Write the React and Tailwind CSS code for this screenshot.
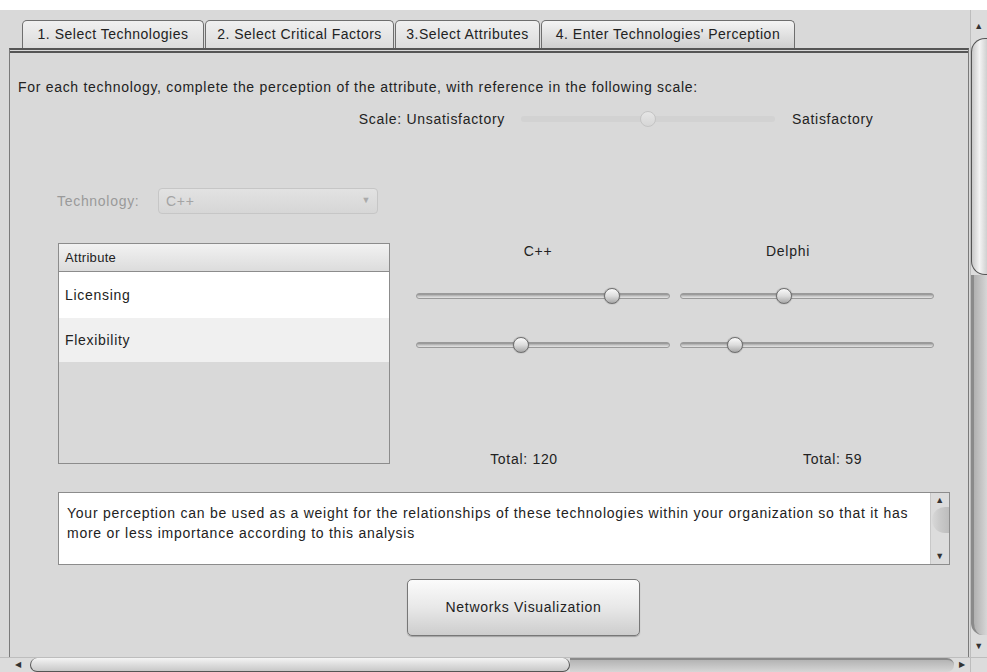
import React from "react";

const font = { fontFamily: '"Liberation Sans", Arial, sans-serif' };

function Slider({ pos, disabled }) {
  return (
    <div className="relative h-[18px] w-full">
      <div
        className={
          disabled
            ? "absolute left-0 right-0 top-[6px] h-[6px] rounded-full bg-[#d2d2d2]"
            : "absolute left-0 right-0 top-[6px] h-[6px] rounded-full border border-[#9a9a9a] bg-gradient-to-b from-[#8e8e8e] via-[#c4c4c4] to-[#e4e4e4]"
        }
      />
      <div
        className={
          disabled
            ? "absolute top-[1px] h-[16px] w-[16px] -translate-x-1/2 rounded-full border border-[#c4c4c4] bg-gradient-to-b from-[#e6e6e6] to-[#d6d6d6]"
            : "absolute top-[1px] h-[16px] w-[16px] -translate-x-1/2 rounded-full border border-[#6e6e6e] bg-gradient-to-b from-[#fafafa] via-[#dcdcdc] to-[#a8a8a8] shadow-[0_0_1px_#555]"
        }
        style={{ left: pos + "%" }}
      />
    </div>
  );
}

function Tab({ label, active, w }) {
  return (
    <div
      className={
        "flex h-[28px] items-center justify-center rounded-t-[5px] border border-b-0 border-[#6e6e6e] text-[14px] tracking-[0.5px] text-[#222] " +
        (active
          ? "bg-gradient-to-b from-[#f4f4f4] to-[#cfcfcf]"
          : "bg-gradient-to-b from-[#f0f0f0] to-[#dcdcdc]")
      }
      style={{ width: w }}
    >
      {label}
    </div>
  );
}

export default function App() {
  return (
    <div
      className="flex h-[672px] w-[987px] flex-col overflow-hidden bg-white tracking-[0.7px]"
      style={font}
    >
      <div className="h-[10px] bg-white" />
      <div className="flex h-[647px]">
        {/* main area */}
        <div className="flex w-[970px] flex-col bg-[#d9d9d9] pl-[9px] pt-[10px]">
          <div className="flex items-end gap-[1px] pl-[13px]">
            <Tab label="1. Select Technologies" w={182} />
            <Tab label="2. Select Critical Factors" w={189} />
            <Tab label="3.Select Attributes" w={145} />
            <Tab label="4. Enter Technologies' Perception" w={254} active />
          </div>
          <div className="mr-[1px] flex flex-1 flex-col border-l border-r border-[#7a7a7a] border-t-[2px] border-t-[#555]">
            <div className="h-[3px] border-b-[2px] border-[#555] bg-[#d9d9d9]" />
            <div className="flex flex-1 flex-col pl-[8px] text-[14px] text-[#222]">
              <div className="mt-[26px] leading-[16px]">
                For each technology, complete the perception of the attribute,
                with reference in the following scale:
              </div>
              <div className="mt-[14px] flex h-[20px] items-center">
                <div className="w-[487px] text-right">Scale: Unsatisfactory</div>
                <div className="ml-[16px] w-[254px]">
                  <Slider pos={50} disabled />
                </div>
                <div className="pl-[17px]">Satisfactory</div>
              </div>
              <div className="mt-[59px] flex h-[26px] items-center">
                <div className="w-[140px] pl-[39px] text-[#9a9a9a]">
                  Technology:
                </div>
                <div className="flex h-[26px] w-[220px] items-center justify-between rounded-[4px] border border-[#c6c6c6] bg-gradient-to-b from-[#e2e2e2] to-[#d6d6d6] pl-[7px] pr-[6px] text-[#a4a4a4]">
                  <span>C++</span>
                  <span className="text-[9px] text-[#aaa]">▼</span>
                </div>
              </div>
              <div className="mt-[29px] flex">
                <div className="ml-[40px] flex h-[221px] w-[332px] flex-col border border-[#8c8c8c] bg-[#d9d9d9]">
                  <div className="flex h-[28px] items-center border-b border-[#8c8c8c] bg-gradient-to-b from-[#f2f2f2] to-[#dcdcdc] pl-[6px] text-[13px] tracking-[0.3px]">
                    Attribute
                  </div>
                  <div className="flex h-[46px] items-center bg-white pl-[6px]">
                    Licensing
                  </div>
                  <div className="flex h-[44px] items-center bg-[#f0f0f0] pl-[6px]">
                    Flexibility
                  </div>
                </div>
                <div className="ml-[26px] flex w-[519px] gap-[10px]">
                  <div className="flex w-[254px] flex-col items-center">
                    <div className="pr-[10px] leading-[16px]">C++</div>
                    <div className="mt-[28px] w-full">
                      <Slider pos={77} />
                    </div>
                    <div className="mt-[31px] w-full">
                      <Slider pos={41.5} />
                    </div>
                    <div className="mt-[97px] pr-[38px] leading-[16px]">
                      Total: 120
                    </div>
                  </div>
                  <div className="flex w-[254px] flex-col items-center">
                    <div className="pr-[38px] leading-[16px]">Delphi</div>
                    <div className="mt-[28px] w-full">
                      <Slider pos={41} />
                    </div>
                    <div className="mt-[31px] w-full">
                      <Slider pos={21.6} />
                    </div>
                    <div className="mt-[97px] w-full pl-[123px] leading-[16px]">
                      Total: 59
                    </div>
                  </div>
                </div>
              </div>
              <div className="ml-[40px] mt-[25px] flex h-[73px] w-[892px] border border-[#8c8c8c] bg-white">
                <div className="flex-1 pl-[8px] pt-[10px] leading-[20px] tracking-[0.75px]">
                  Your perception can be used as a weight for the relationships
                  of these technologies within your organization so that it has
                  more or less importance according to this analysis
                </div>
                <div className="flex w-[19px] flex-col items-center border-l border-[#c8c8c8] bg-[#dcdcdc]">
                  <span className="mt-[2px] text-[9px] leading-[10px] text-[#333]">
                    ▲
                  </span>
                  <div className="mt-[2px] h-[26px] w-[17px] rounded-l-full bg-gradient-to-r from-[#d8d8d8] via-[#c8c8c8] to-[#bdbdbd]" />
                  <span className="mb-[3px] mt-auto text-[9px] leading-[10px] text-[#333]">
                    ▼
                  </span>
                </div>
              </div>
              <div className="mt-[14px] flex">
                <div className="ml-[389px] flex h-[57px] w-[233px] items-center justify-center rounded-[5px] border border-[#777] bg-gradient-to-b from-[#fbfbfb] via-[#e8e8e8] to-[#cdcdcd] shadow-[0_1px_1px_rgba(0,0,0,0.25)]">
                  Networks Visualization
                </div>
              </div>
            </div>
          </div>
        </div>
        {/* vertical scrollbar */}
        <div className="flex w-[17px] flex-col border-l border-[#bdbdbd] bg-[#dcdcdc]">
          <div className="flex h-[28px] items-start justify-center pt-[11px] text-[9px] leading-[10px] text-[#333]">
            ▲
          </div>
          <div className="h-[237px] rounded-l-[14px] border border-r-0 border-[#555] bg-gradient-to-r from-[#c8c8c8] via-[#f4f4f4] to-[#d0d0d0]" />
          <div className="flex-1 rounded-bl-[12px] border-l-[3px] border-[#8a8a8a] bg-gradient-to-r from-[#b0b0b0] to-[#d6d6d6]" />
          <div className="flex h-[22px] items-center justify-center text-[9px] leading-[10px] text-[#333]">
            ▼
          </div>
        </div>
      </div>
      {/* horizontal scrollbar */}
      <div className="flex h-[15px] border-t border-[#bdbdbd] bg-[#dcdcdc]">
        <div className="flex w-[970px]">
          <div className="flex w-[30px] items-center justify-end pr-[8px] text-[8px] text-[#333]">
            ◀
          </div>
          <div className="w-[540px] rounded-l-[12px] rounded-r-[12px] border border-t-0 border-[#555] bg-gradient-to-b from-[#f4f4f4] to-[#c8c8c8]" />
          <div className="flex-1 rounded-r-[10px] border-t-[2px] border-[#8a8a8a] bg-gradient-to-b from-[#b4b4b4] to-[#d6d6d6]" />
          <div className="flex w-[16px] items-center justify-center text-[8px] text-[#333]">
            ▶
          </div>
        </div>
        <div className="w-[17px] border-l border-[#bdbdbd] bg-[#dcdcdc]" />
      </div>
    </div>
  );
}
